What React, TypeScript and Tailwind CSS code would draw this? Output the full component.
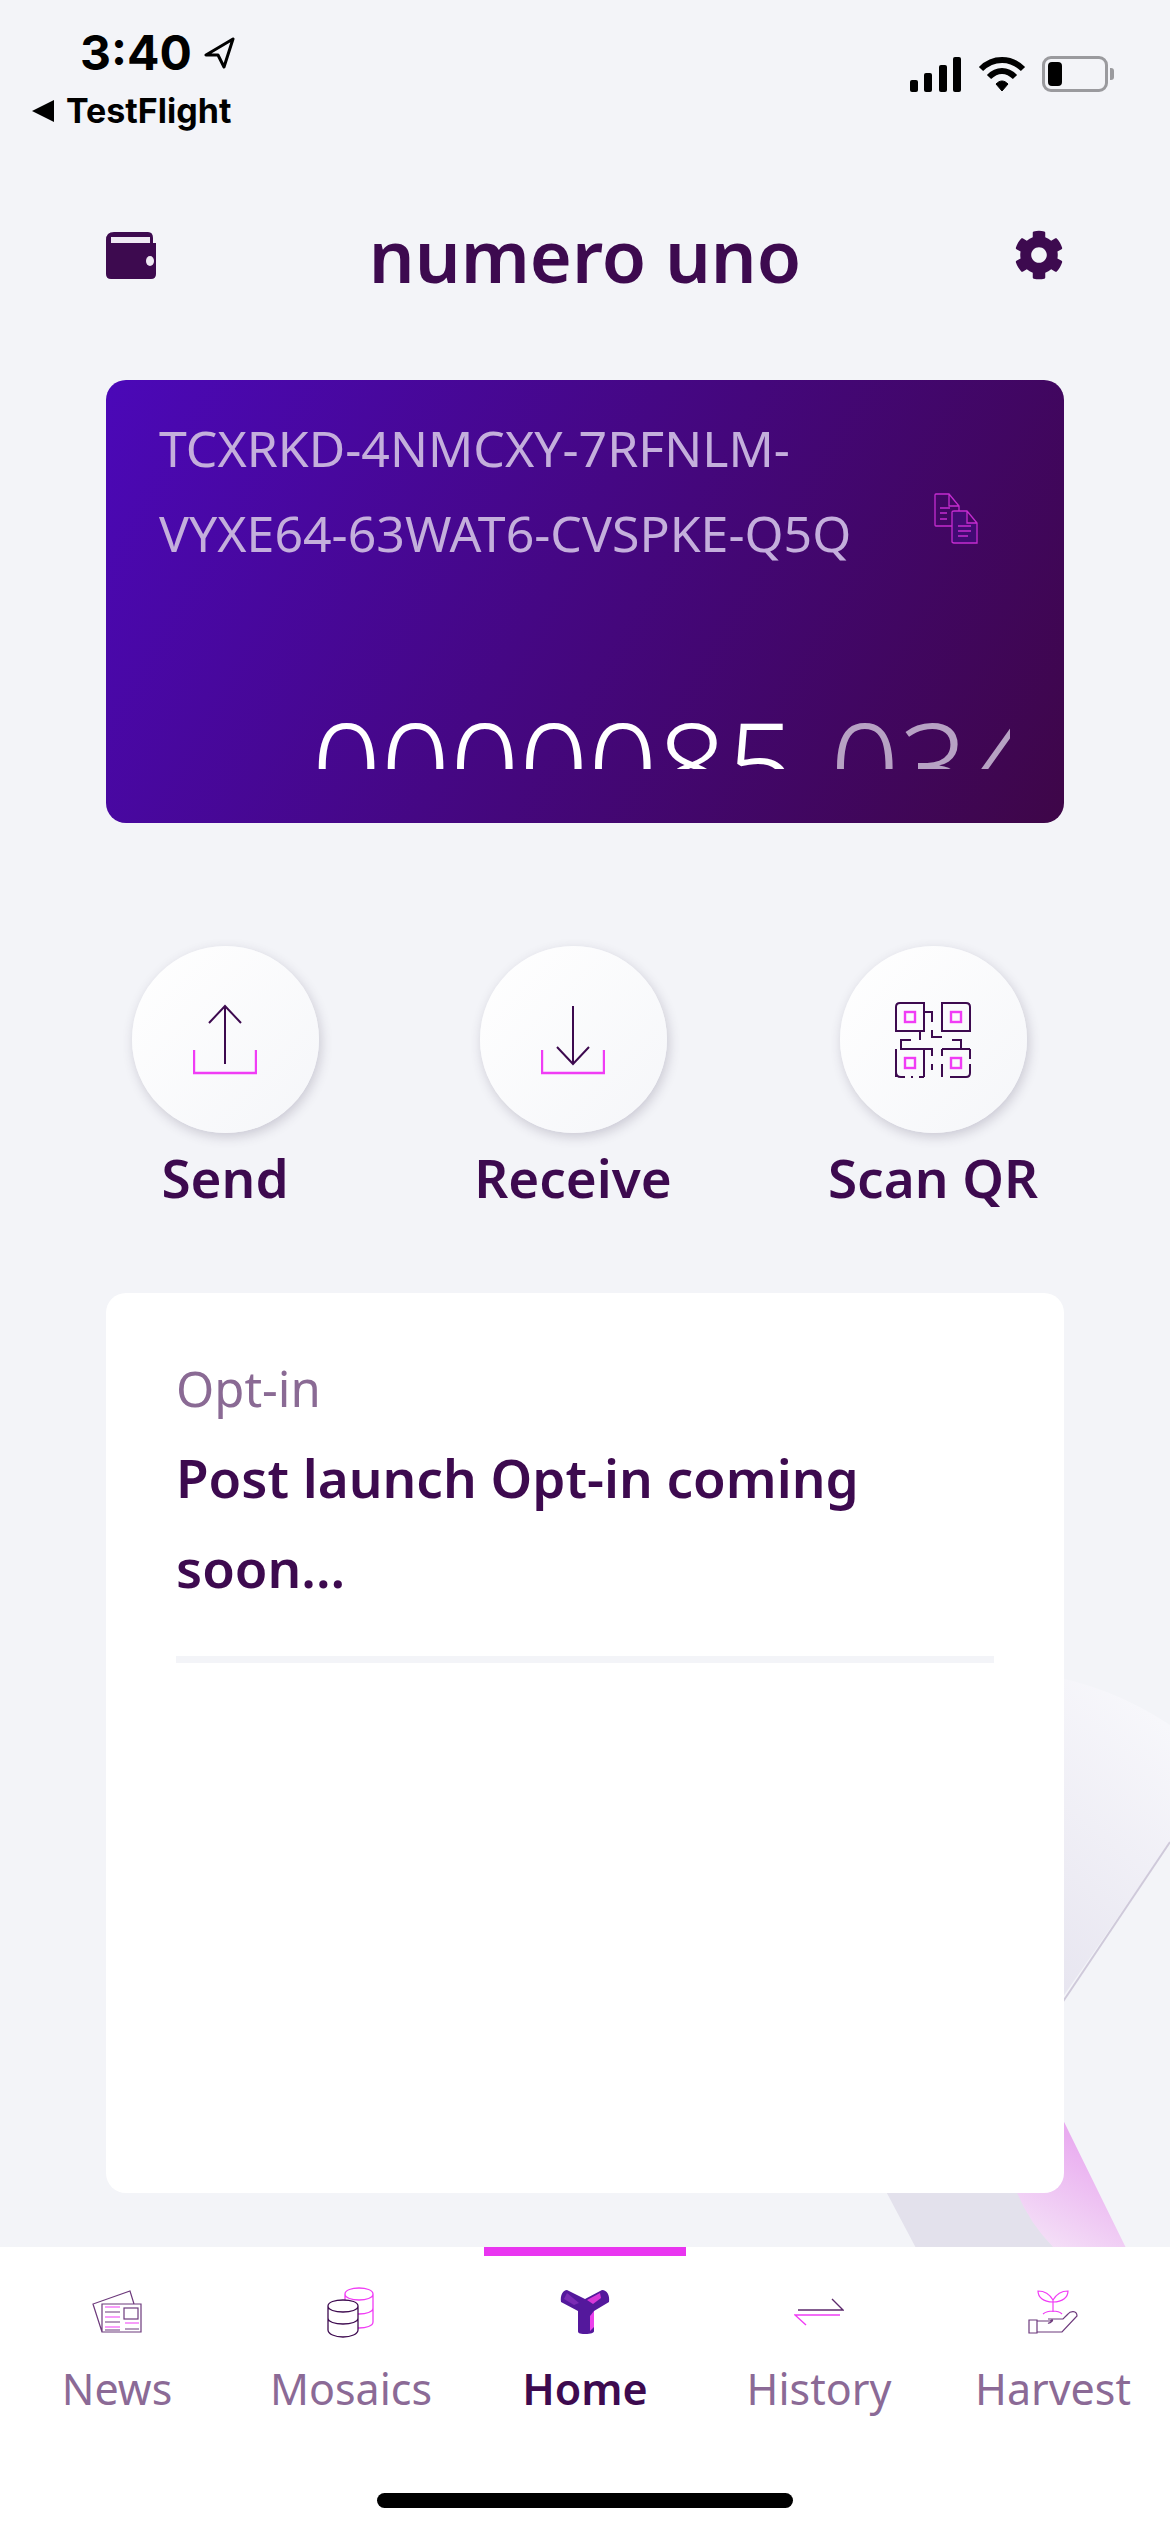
import { FaCog } from 'react-icons/fa';

const DARK = '#3d0a4f';
const PINK = '#f03cf5';

function SendIcon() {
  return (
    <svg width="64" height="72" viewBox="0 0 64 72" fill="none">
      <path d="M32 2V60M16 19L32 2L48 19" stroke={DARK} strokeWidth="2" />
      <path d="M1 46V69H63V46" stroke={PINK} strokeWidth="2.4" />
    </svg>
  );
}

function ReceiveIcon() {
  return (
    <svg width="64" height="72" viewBox="0 0 64 72" fill="none">
      <path d="M32 2V60M16 43L32 60L48 43" stroke={DARK} strokeWidth="2" />
      <path d="M1 46V69H63V46" stroke={PINK} strokeWidth="2.4" />
    </svg>
  );
}

function QrIcon() {
  return (
    <svg width="76" height="76" viewBox="0 0 76 76" fill="none" stroke={DARK} strokeWidth="2">
      <path d="M5 1H29V29H1V5Q1 1 5 1ZM47 1H71Q75 1 75 5V29H47ZM5 47H29V75M1 75V47M47 47H75M29 10H37V20M37 28V35H47M25 29V38M6 47V38H16M29 47H37V54M37 62V68M47 47V54M47 62V75M57 38H66V47M75 47V57M75 62V71Q75 75 71 75H55M1 70Q1 75 6 75H10M16 75H18M24 75H29" />
      <rect x="10" y="10" width="10" height="10" stroke={PINK} strokeWidth="2.4" />
      <rect x="56" y="10" width="10" height="10" stroke={PINK} strokeWidth="2.4" />
      <rect x="10" y="56" width="10" height="10" stroke={PINK} strokeWidth="2.4" />
      <rect x="56" y="56" width="10" height="10" stroke={PINK} strokeWidth="2.4" />
    </svg>
  );
}

function NewsIcon() {
  return (
    <svg width="50" height="44" viewBox="0 0 50 44" fill="none" stroke="#6d3a7c" strokeWidth="1.2">
      <path d="M10 14V42H49V14H10ZM10 42L1 14L38 1L42 14" />
      <rect x="32" y="18" width="14" height="11" />
      <path d="M13 17H28M13 27H28M13 37H28M33 33H47" stroke={PINK} />
      <path d="M13 22H28M13 32H28M13 40H28M33 39H47" />
    </svg>
  );
}

function MosaicsIcon() {
  const coin = 'M1 8V36C1 40 8 42 15 42C22 42 29 40 29 36V8M1 8C1 4 8 2 15 2C22 2 29 4 29 8C29 12 22 14 15 14C8 14 1 12 1 8ZM1 22C1 26 8 28 15 28C22 28 29 26 29 22';
  return (
    <svg width="48" height="52" viewBox="0 0 48 52" fill="none">
      <path transform="translate(17 0)" d={coin} stroke={PINK} strokeWidth="1.3" />
      <path transform="translate(1 13)" d="M0 7V31C0 35 7 38 15 38C23 38 30 35 30 31V7C30 3 23 1 15 1C7 1 0 3 0 7Z" fill="white" />
      <path transform="translate(1 13)" d="M0 7V31C0 35 7 38 15 38C23 38 30 35 30 31V7M0 7C0 3 7 1 15 1C23 1 30 3 30 7C30 11 23 13 15 13C7 13 0 11 0 7ZM0 19C0 23 7 25 15 25C23 25 30 23 30 19" stroke={DARK} strokeWidth="1.3" />
    </svg>
  );
}

function HomeIcon() {
  return (
    <svg width="50" height="44" viewBox="0 0 50 44" fill="none">
      <path d="M7 0L25 9L42 0C47 0 50 5 49 12L34 21V41C34 43 31 44 25 44C19 44 18 43 18 41V21L1 12C0 5 3 0 7 0Z" fill="#54189c" />
      <path d="M27 10L40 3L41 8L33 14Z" fill="#d838d8" />
      <path d="M7 3L19 13L14 15L4 9Z" fill="#7a2cb4" />
      <path d="M30 26L34 21V37L30 41Z" fill="#ec40ec" />
    </svg>
  );
}

function HistoryIcon() {
  return (
    <svg width="50" height="28" viewBox="0 0 50 28" fill="none" strokeWidth="1.4">
      <path d="M4 12H49L38 1" stroke="#5c2a6c" />
      <path d="M46 17H1L12 27" stroke={PINK} />
    </svg>
  );
}

function HarvestIcon() {
  return (
    <svg width="50" height="44" viewBox="0 0 50 44" fill="none" strokeWidth="1.2">
      <path d="M25 22V10M25 10C21 3 15 1 10 1C10 7 15 12 25 12M25 10C29 3 35 1 40 1C40 7 35 12 25 12M15 24C20 20 30 20 34 24" stroke={PINK} />
      <path d="M9 30H1V43H9ZM9 31H22C28 28 22 34 20 33M9 42H34L49 26C49 20 42 21 40 24L35 29H20" stroke="#6d3a7c" />
    </svg>
  );
}

function CopyIcon() {
  return (
    <svg width="44" height="51" viewBox="0 0 44 51" fill="none" stroke="#c42ccf" strokeWidth="1.3">
      <path d="M25 33H2Q1 33 1 32V2Q1 1 2 1H15L25 13V33ZM15 1V13H25" />
      <path d="M43 50H20Q19 50 18 49V19Q18 18 20 18H33L43 30V50ZM33 18V30H43" fill="#420a74" />
      <path d="M6 15H16M6 20H13M6 26H13M24 33H37M24 38H37M24 43H34" />
    </svg>
  );
}

function BackgroundShapes() {
  return (
    <svg className="absolute left-0 top-0" width="1170" height="2532" viewBox="0 0 1170 2532" fill="none">
      <defs>
        <linearGradient id="sheet" x1="0.5" y1="0" x2="0.2" y2="1">
          <stop offset="0" stopColor="#f7f7fb" />
          <stop offset="1" stopColor="#e6e4ef" />
        </linearGradient>
        <linearGradient id="petal" x1="0.6" y1="0.3" x2="0.35" y2="1">
          <stop offset="0" stopColor="#e8a6ef" />
          <stop offset="1" stopColor="#f4dff7" />
        </linearGradient>
      </defs>
      <path d="M1040 1674Q1110 1685 1170 1725V1842L1040 2030Z" fill="url(#sheet)" />
      <path d="M1170 1842L1060 2006" stroke="#cfc9da" strokeWidth="2" />
      <path d="M880 2180H1070V2250H917Z" fill="#e3e1ec" />
      <path d="M1040 2073L1126 2248H1054Q1026 2220 1012 2180H1040Z" fill="url(#petal)" />
    </svg>
  );
}

const tabs = [
  { label: 'News', icon: <NewsIcon /> },
  { label: 'Mosaics', icon: <MosaicsIcon /> },
  { label: 'Home', icon: <HomeIcon />, active: true },
  { label: 'History', icon: <HistoryIcon /> },
  { label: 'Harvest', icon: <HarvestIcon /> },
];

export default function App() {
  return (
    <div className="relative flex h-[2532px] w-[1170px] flex-col overflow-hidden bg-[#f3f4f8] font-['Noto_Sans',sans-serif] text-[#3d0a4f]">
      <BackgroundShapes />

      {/* status bar */}
      <div className="relative flex h-[140px] justify-between pl-[32px] pr-[56px] font-['Inter',sans-serif] text-black">
        <div>
          <div className="ml-[48px] mt-[28px] flex h-[50px] items-center gap-[11px] text-[48px] font-bold leading-none">
            <span>3:40</span>
            <svg width="32" height="32" viewBox="0 0 32 32" fill="none" stroke="black" strokeWidth="3" strokeLinejoin="round">
              <path d="M30 2L3 18L15 18L21 30Z" />
            </svg>
          </div>
          <div className="mt-[15px] flex items-center gap-[12px] text-[34px] font-bold leading-[36px]">
            <svg width="22" height="22" viewBox="0 0 22 22" fill="black">
              <path d="M22 0V22L0 11Z" />
            </svg>
            <span>TestFlight</span>
          </div>
        </div>
        <div className="mt-[55px] flex h-[38px] items-center gap-[16px]">
          <svg width="52" height="36" viewBox="0 0 52 36" fill="black">
            <rect x="0" y="24" width="8" height="12" rx="2" />
            <rect x="14" y="17" width="8" height="19" rx="2" />
            <rect x="29" y="9" width="8" height="27" rx="2" />
            <rect x="43" y="1" width="8" height="35" rx="2" />
          </svg>
          <svg width="48" height="36" viewBox="0 0 48 36" fill="none" stroke="black" strokeWidth="6">
            <path d="M3 13C15 1 33 1 45 13M11 21C19 13 29 13 37 21" />
            <path d="M18 28C22 24 26 24 30 28L24 35Z" fill="black" strokeWidth="1" />
          </svg>
          <div className="flex items-center">
            <div className="flex h-[36px] w-[66px] items-center rounded-[9px] border-[3px] border-[#9a9a9e] pl-[3px]">
              <div className="h-[24px] w-[14px] rounded-[4px] bg-black" />
            </div>
            <div className="ml-[2px] h-[12px] w-[4px] rounded-r-[3px] bg-[#9a9a9e]" />
          </div>
        </div>
      </div>

      {/* header */}
      <div className="relative mt-[75px] flex h-[80px] items-center justify-between px-[106px]">
        <svg width="50" height="47" viewBox="0 0 50 47" fill={DARK}>
          <path d="M8 0H42Q47 0 47 6V11H50V42Q50 47 45 47H5Q0 47 0 42V8Q0 0 8 0Z" />
          <rect x="5" y="5" width="39" height="6" fill="#efe9f3" />
          <ellipse cx="44" cy="29" rx="4" ry="5" fill="#efe9f3" />
        </svg>
        <h1 className="text-[72px] font-semibold leading-[80px]">numero uno</h1>
        <FaCog className="text-[50px]" />
      </div>

      {/* account card */}
      <div className="relative mx-[106px] mt-[85px] h-[443px] rounded-[20px] bg-[linear-gradient(120deg,#4b08b8,#3e0648)]">
        <div className="pl-[53px] pt-[26px] text-[50px] leading-[85px] text-[#c4afdc]">
          <div>TCXRKD-4NMCXY-7RFNLM-</div>
          <div>VYXE64-63WAT6-CVSPKE-Q5Q</div>
        </div>
        <div className="absolute left-[828px] top-[113px]">
          <CopyIcon />
        </div>
        <div className="ml-[206px] mt-[134px] h-[59px] w-[698px] overflow-hidden whitespace-nowrap text-[121px] font-light leading-[108px] text-white">
          0000085<span className="pl-[5px] text-[#b7a2c4]">.034</span>
        </div>
      </div>

      {/* actions */}
      <div className="relative mt-[123px] flex pl-[75px] text-[53px] font-semibold leading-[60px]">
        {[
          { label: 'Send', icon: <SendIcon />, cls: 'w-[348px]' },
          { label: 'Receive', icon: <ReceiveIcon />, cls: 'w-[360px]' },
          { label: 'Scan QR', icon: <QrIcon />, cls: 'w-[300px]' },
        ].map((a) => (
          <div key={a.label} className={a.cls}>
            <div className="flex w-[300px] flex-col items-center">
              <div className="flex h-[187px] w-[187px] items-center justify-center rounded-full bg-[linear-gradient(135deg,#ffffff,#f5f6f9)] shadow-[2px_4px_12px_rgba(60,50,80,0.22)]">
                {a.icon}
              </div>
              <div className="mt-[15px]">{a.label}</div>
            </div>
          </div>
        ))}
      </div>

      {/* opt-in panel */}
      <div className="relative mx-[106px] mt-[85px] h-[900px] rounded-[20px] bg-white px-[70px] pt-[60px]">
        <div className="text-[49px] leading-[70px] text-[#8a6a94]">Opt-in</div>
        <div className="mt-[10px] text-[53px] font-semibold leading-[90px]">Post launch Opt-in coming soon...</div>
        <div className="mt-[43px] h-[7px] bg-[#f3f4f8]" />
      </div>

      {/* tab bar */}
      <div className="relative mt-auto flex h-[285px] flex-col bg-white">
        <div className="flex flex-1">
          {tabs.map((t) => (
            <div key={t.label} className="flex w-[234px] flex-col items-center">
              <div className={`h-[9px] w-[202px] ${t.active ? 'bg-[#e935f0]' : ''}`} />
              <div className="mt-[30px] flex h-[52px] items-center justify-center">{t.icon}</div>
              <div className={`mt-[21px] text-[43px] leading-[60px] ${t.active ? 'font-semibold text-[#3d0a4f]' : 'text-[#8b6a96]'}`}>
                {t.label}
              </div>
            </div>
          ))}
        </div>
        <div className="mx-auto mb-[24px] h-[15px] w-[416px] rounded-full bg-black" />
      </div>
    </div>
  );
}
